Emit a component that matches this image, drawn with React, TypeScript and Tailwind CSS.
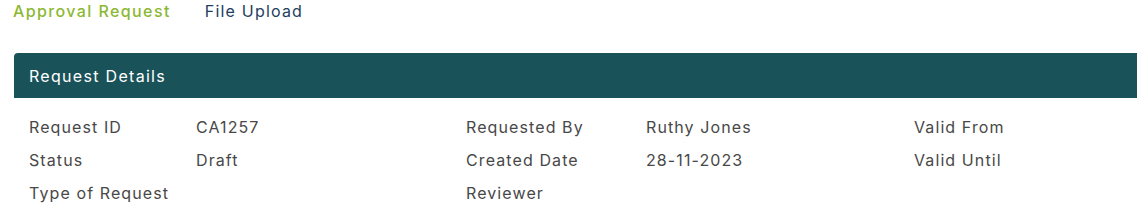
// Approval request summary: tabs + request details card.

const rows = [
  [
    ["Request ID", "CA1257"],
    ["Requested By", "Ruthy Jones"],
    ["Valid From", ""],
  ],
  [
    ["Status", "Draft"],
    ["Created Date", "28-11-2023"],
    ["Valid Until", ""],
  ],
  [
    ["Type of Request", ""],
    ["Reviewer", ""],
    ["", ""],
  ],
];

export default function App() {
  return (
    <div
      className="w-full h-[212px] overflow-hidden bg-white text-[16px]"
      style={{ fontFamily: "Inter, 'Open Sans', sans-serif" }}
    >
      <div className="flex items-center h-[22px] pl-[13px] gap-[34px] tracking-[1.4px]">
        <button className="text-[#8cb833] font-medium">Approval Request</button>
        <button className="text-[#22405e] tracking-[1.2px]">File Upload</button>
      </div>

      <div className="ml-[14px] mt-[31px] w-[1140px]">
        <div className="h-[45px] bg-[#1a525a] rounded-tl-[4px] flex items-center px-[15px] text-white tracking-[1.3px]">
          Request Details
        </div>
        <div className="px-[15px] pt-[12px] text-[#484848] tracking-[1.1px]">
          {rows.map((row, i) => (
            <div key={i} className="flex h-[33px] items-center">
              {row.map(([label, value], j) => (
                <div
                  key={j}
                  className={
                    j === 0
                      ? "flex w-[437px]"
                      : j === 1
                      ? "flex w-[448px]"
                      : "flex flex-1"
                  }
                >
                  <span className={j === 0 ? "w-[167px]" : "w-[180px]"}>
                    {label}
                  </span>
                  <span>{value}</span>
                </div>
              ))}
            </div>
          ))}
        </div>
      </div>
    </div>
  );
}
